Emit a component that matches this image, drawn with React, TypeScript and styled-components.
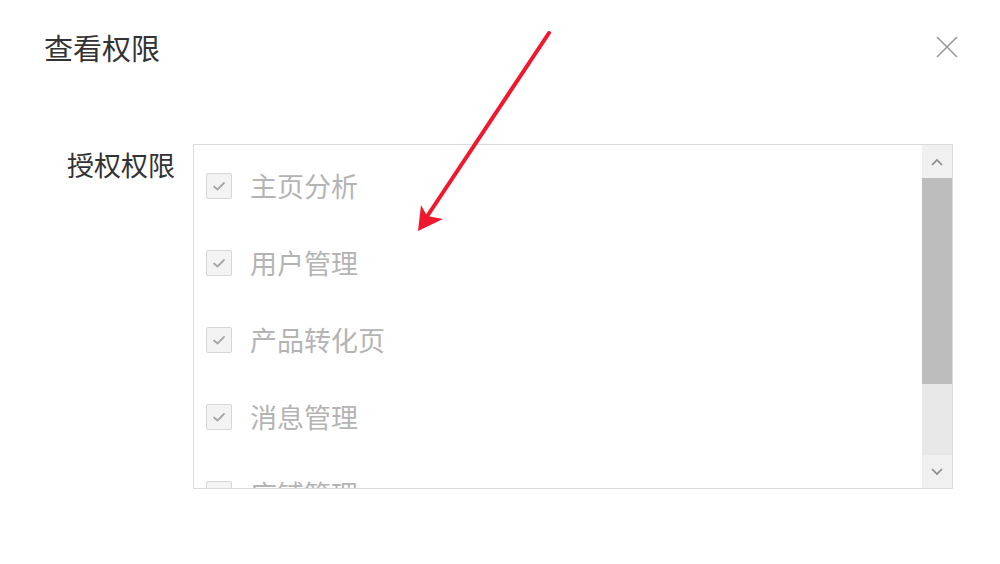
import React from 'react';
import styled, {createGlobalStyle} from "styled-components";

const GlobalStyle = createGlobalStyle`
  html, body {
    margin: 0;
    padding: 0;
    background: #ffffff;
  }
  body {
    font-family: "Noto Sans CJK SC", "Noto Sans", sans-serif;
  }
`

const permissions = ["主页分析", "用户管理", "产品转化页", "消息管理", "店铺管理"]

const CheckIcon = () => (
    <svg width="16" height="16" viewBox="0 0 16 16">
        <path d="M3 8.5 L6.5 11.5 L13 5" fill="none" stroke="#a8a8a8" strokeWidth="1.8" strokeLinecap="round" strokeLinejoin="round"/>
    </svg>
)

const Chevron = ({up}: {up: boolean}) => (
    <svg width="14" height="10" viewBox="0 0 14 10">
        <path d={up ? "M2 8 L7 3 L12 8" : "M2 2 L7 7 L12 2"} fill="none" stroke="#8a8a8a" strokeWidth="1.6"/>
    </svg>
)

export default function App() {
    return (
        <>
            <GlobalStyle/>
            <Page>
                <Header>
                    <Title>查看权限</Title>
                    <CloseBtn aria-label="close">
                        <svg width="22" height="22" viewBox="0 0 22 22">
                            <path d="M1 1 L21 21 M21 1 L1 21" stroke="#999" strokeWidth="1.6"/>
                        </svg>
                    </CloseBtn>
                </Header>
                <FormRow>
                    <Label>授权权限</Label>
                    <ListBox>
                        <List>
                            {permissions.map(name =>
                                <Item key={name}>
                                    <Checkbox><CheckIcon/></Checkbox>
                                    <ItemText>{name}</ItemText>
                                </Item>
                            )}
                        </List>
                        <Scrollbar>
                            <ScrollBtn><Chevron up={true}/></ScrollBtn>
                            <Thumb/>
                            <Track/>
                            <ScrollBtn><Chevron up={false}/></ScrollBtn>
                        </Scrollbar>
                    </ListBox>
                </FormRow>
                <Annotation width="1000" height="564" viewBox="0 0 1000 564">
                    <line x1="549" y1="33" x2="426" y2="218" stroke="#f0182c" strokeWidth="4" strokeLinecap="round"/>
                    <polygon points="418,231 421,205 427,216 443,219" fill="#f0182c"/>
                </Annotation>
            </Page>
        </>
    )
}

const Page = styled.div`
  position: relative;
  width: 1000px;
  height: 564px;
  overflow: hidden;
  background: #fff;
`
const Header = styled.div`
  display: flex;
  justify-content: space-between;
  align-items: center;
  padding: 32px 42px 0 44px;
`
const Title = styled.h2`
  margin: 0;
  font-size: 29px;
  line-height: 30px;
  font-weight: 400;
  color: #333;
`
const CloseBtn = styled.button`
  display: flex;
  align-items: center;
  justify-content: center;
  padding: 0;
  border: none;
  background: none;
  width: 22px;
  height: 22px;
`
const FormRow = styled.div`
  display: flex;
  align-items: flex-start;
  gap: 18px;
  margin-top: 82px;
`
const Label = styled.div`
  width: 175px;
  padding-top: 6px;
  text-align: right;
  font-size: 27px;
  line-height: 30px;
  color: #333;
`
const ListBox = styled.div`
  display: flex;
  width: 760px;
  height: 345px;
  border: 1px solid #dcdcdc;
  box-sizing: border-box;
  overflow: hidden;
`
const List = styled.div`
  flex: 1;
  padding: 2px 0 0 12px;
`
const Item = styled.div`
  display: flex;
  align-items: center;
  gap: 18px;
  height: 77px;
`
const Checkbox = styled.span`
  display: flex;
  align-items: center;
  justify-content: center;
  width: 26px;
  height: 26px;
  box-sizing: border-box;
  border: 1px solid #d6d6d6;
  border-radius: 2px;
  background: #f3f3f3;
`
const ItemText = styled.span`
  font-size: 27px;
  line-height: 30px;
  color: #b4b4b4;
`
const Scrollbar = styled.div`
  display: flex;
  flex-direction: column;
  width: 30px;
  background: #ececec;
`
const ScrollBtn = styled.div`
  display: flex;
  align-items: center;
  justify-content: center;
  height: 33px;
  background: #f0f0f0;
`
const Thumb = styled.div`
  height: 206px;
  background: #bdbdbd;
`
const Track = styled.div`
  flex: 1;
  background: #e8e8e8;
`
const Annotation = styled.svg`
  position: absolute;
  left: 0;
  top: 0;
  pointer-events: none;
`
